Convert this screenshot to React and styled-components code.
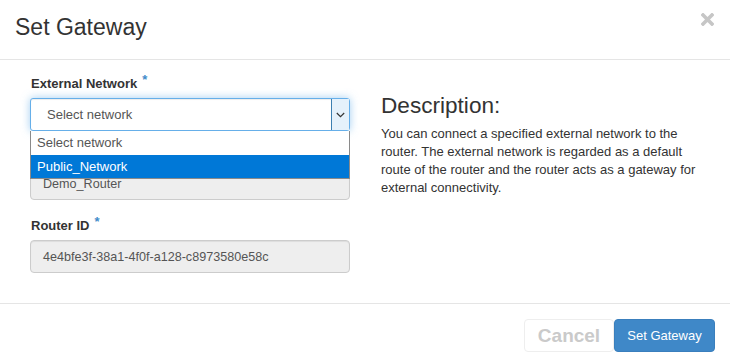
import React from "react";
import styled, { createGlobalStyle } from "styled-components";

const GlobalStyle = createGlobalStyle`
  html, body {
    margin: 0;
    padding: 0;
    background: #fff;
  }
  body {
    font-family: "Liberation Sans", Arial, sans-serif;
    color: #333;
  }
  * {
    box-sizing: border-box;
  }
`;

const Modal = styled.div`
  width: 730px;
  height: 363px;
  display: flex;
  flex-direction: column;
  background: #fff;
`;

const Header = styled.div`
  height: 60px;
  padding: 14px 16px 0 15px;
  border-bottom: 1px solid #e5e5e5;
  display: flex;
  justify-content: space-between;
  align-items: flex-start;
`;

const Title = styled.h4`
  margin: 0;
  font-size: 23px;
  line-height: 26px;
  font-weight: 400;
  color: #333;
`;

const Close = styled.button`
  border: 0;
  background: none;
  padding: 0;
  margin-top: -1px;
  width: 13px;
  height: 13px;
  display: flex;
  cursor: pointer;
`;

const Body = styled.div`
  flex: 1;
  display: grid;
  grid-template-columns: 320px 320px;
  column-gap: 31px;
  padding: 15px 30px 0 30px;
  border-bottom: 1px solid #e5e5e5;
`;

const Column = styled.div`
  display: flex;
  flex-direction: column;
`;

const FormGroup = styled.div`
  position: relative;
  display: flex;
  flex-direction: column;
  margin-bottom: ${({ $mb }) => $mb}px;
`;

const Label = styled.label`
  font-size: 13px;
  line-height: 18px;
  font-weight: 700;
  color: #333;
  margin-bottom: 5px;
  padding-left: 1px;
  visibility: ${({ $hidden }) => ($hidden ? "hidden" : "visible")};
`;

const Required = styled.span`
  color: #428bca;
  font-size: 13px;
  margin-left: 5px;
  vertical-align: 4px;
  line-height: 0;
`;

const SelectBox = styled.div`
  height: 33px;
  display: flex;
  align-items: stretch;
  border: 1px solid #66afe9;
  border-radius: 3px;
  box-shadow: inset 0 1px 1px rgba(0, 0, 0, 0.075),
    0 0 8px rgba(102, 175, 233, 0.6);
  background: #fff;
`;

const SelectValue = styled.div`
  flex: 1;
  display: flex;
  align-items: center;
  padding-left: 16px;
  font-size: 13px;
  color: #555;
`;

const Arrow = styled.div`
  width: 18px;
  display: flex;
  align-items: center;
  justify-content: center;
  background: #e5f1fb;
  border-left: 1px solid #3c7fb1;
`;

const Options = styled.ul`
  position: absolute;
  left: 0;
  right: 0;
  top: 56px;
  margin: 0;
  padding: 0;
  list-style: none;
  background: #fff;
  border: 1px solid #8a8a8a;
  border-top: 0;
  z-index: 2;
`;

const Option = styled.li`
  height: 23.5px;
  padding-left: 6px;
  display: flex;
  align-items: center;
  font-size: 13px;
  color: ${({ $active }) => ($active ? "#fff" : "#555")};
  background: ${({ $active }) => ($active ? "#0078d7" : "#fff")};
`;

const Input = styled.div`
  height: 33px;
  display: flex;
  align-items: center;
  padding-left: 12px;
  font-size: 12.6px;
  color: #555;
  background: #eee;
  border: 1px solid #ccc;
  border-radius: 4px;
  box-shadow: inset 0 1px 1px rgba(0, 0, 0, 0.075);
`;

const Heading = styled.h3`
  margin: 18px 0 6px;
  font-size: 22.6px;
  line-height: 26px;
  font-weight: 400;
  color: #333;
`;

const Text = styled.p`
  margin: 0;
  font-size: 13px;
  line-height: 18px;
  color: #333;
`;

const Footer = styled.div`
  height: 59px;
  padding: 15px 15px 0;
  display: flex;
  justify-content: flex-end;
  align-items: flex-start;
`;

const Button = styled.button`
  height: 33px;
  border-radius: 4px;
  font-family: "Liberation Sans", Arial, sans-serif;
  white-space: nowrap;
  cursor: pointer;
  padding: 0;
  font-size: ${({ $primary }) => ($primary ? "13px" : "19px")};
  font-weight: ${({ $primary }) => ($primary ? 400 : 700)};
  color: ${({ $primary }) => ($primary ? "#fff" : "#cacaca")};
  background: ${({ $primary }) => ($primary ? "#3f88c8" : "#fff")};
  border: 1px solid ${({ $primary }) => ($primary ? "#3a7fbd" : "#eee")};
  width: ${({ $primary }) => ($primary ? "101px" : "90px")};
`;

const CloseIcon = () => (
  <svg width="13" height="13" viewBox="0 0 13 13">
    <path
      d="M2 2 L11 11 M11 2 L2 11"
      stroke="#c6c6c6"
      strokeWidth="3.6"
      strokeLinecap="square"
    />
  </svg>
);

const Chevron = () => (
  <svg width="9" height="6" viewBox="0 0 9 6">
    <polyline
      points="0.8,1 4.5,4.6 8.2,1"
      fill="none"
      stroke="#333"
      strokeWidth="1.2"
    />
  </svg>
);

export default function App() {
  return (
    <>
      <GlobalStyle />
      <Modal>
        <Header>
          <Title>Set Gateway</Title>
          <Close aria-label="Close">
            <CloseIcon />
          </Close>
        </Header>
        <Body>
          <Column>
            <FormGroup $mb={13}>
              <Label>
                External Network<Required>*</Required>
              </Label>
              <SelectBox>
                <SelectValue>Select network</SelectValue>
                <Arrow>
                  <Chevron />
                </Arrow>
              </SelectBox>
              <Options>
                <Option>Select network</Option>
                <Option $active>Public_Network</Option>
              </Options>
            </FormGroup>
            <FormGroup $mb={17}>
              <Label $hidden>Router Name</Label>
              <Input>Demo_Router</Input>
            </FormGroup>
            <FormGroup $mb={0}>
              <Label>
                Router ID<Required>*</Required>
              </Label>
              <Input>4e4bfe3f-38a1-4f0f-a128-c8973580e58c</Input>
            </FormGroup>
          </Column>
          <Column>
            <Heading>Description:</Heading>
            <Text>
              You can connect a specified external network to the router. The
              external network is regarded as a default route of the router and
              the router acts as a gateway for external connectivity.
            </Text>
          </Column>
        </Body>
        <Footer>
          <Button>Cancel</Button>
          <Button $primary>Set Gateway</Button>
        </Footer>
      </Modal>
    </>
  );
}
